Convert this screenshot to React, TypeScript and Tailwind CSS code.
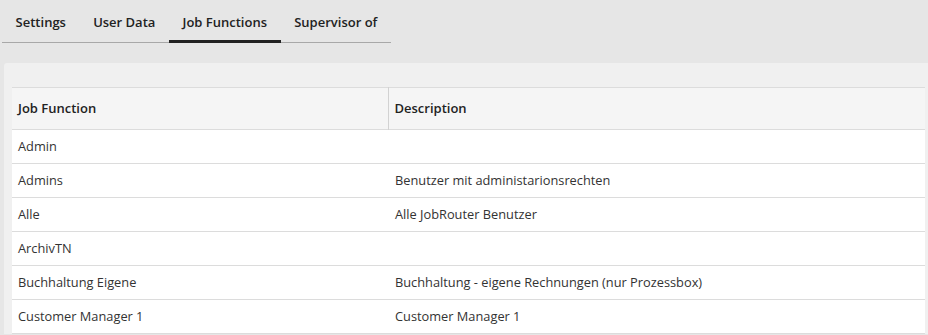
const tabs = [
  { name: "Settings", current: false },
  { name: "User Data", current: false },
  { name: "Job Functions", current: true },
  { name: "Supervisor of", current: false },
];

const rows = [
  { name: "Admin", description: "" },
  { name: "Admins", description: "Benutzer mit administarionsrechten" },
  { name: "Alle", description: "Alle JobRouter Benutzer" },
  { name: "ArchivTN", description: "" },
  { name: "Buchhaltung Eigene", description: "Buchhaltung - eigene Rechnungen (nur Prozessbox)" },
  { name: "Customer Manager 1", description: "Customer Manager 1" },
];

function classNames(...classes: string[]) {
  return classes.filter(Boolean).join(" ");
}

export default function App() {
  return (
    <div
      className="w-[928px] h-[335px] overflow-hidden bg-[#e6e6e6] text-[12.8px] text-[#333]"
      style={{ fontFamily: '"Open Sans", "Liberation Sans", sans-serif' }}
    >
      {/* tab bar */}
      <div className="pl-[2px] pt-[1px]">
        <div className="inline-flex border-b border-[#a8a8a8]">
          {tabs.map((tab) => (
            <div
              key={tab.name}
              className={classNames(
                tab.current ? "border-[#222]" : "border-transparent",
                "h-[42px] -mb-px px-[13.6px] pt-[4px] flex items-center border-b-[3px] text-[13px] font-semibold text-[#222]"
              )}
            >
              {tab.name}
            </div>
          ))}
        </div>
      </div>

      {/* panel */}
      <div className="mt-[20px] ml-[4px] mr-[-4px] rounded-tl-[3px] bg-[#f0f0f0] pt-[24px] pl-[8px] pr-[7px]">
        <table className="w-full border-collapse">
          <thead>
            <tr className="bg-[#f5f5f5] border-t border-b border-[#dcdcdc]">
              <th className="h-[42px] w-[376px] pl-[6px] text-left font-semibold text-[13px] text-[#222] border-r border-[#d2d2d2]">
                Job Function
              </th>
              <th className="h-[42px] pl-[6px] text-left font-semibold text-[13px] text-[#222]">Description</th>
            </tr>
          </thead>
          <tbody className="bg-white">
            {rows.map((row) => (
              <tr key={row.name} className="border-b border-[#dcdcdc]">
                <td className="h-[34px] pl-[6px]">{row.name}</td>
                <td className="h-[34px] pl-[7px]">{row.description}</td>
              </tr>
            ))}
          </tbody>
        </table>
      </div>
    </div>
  );
}
